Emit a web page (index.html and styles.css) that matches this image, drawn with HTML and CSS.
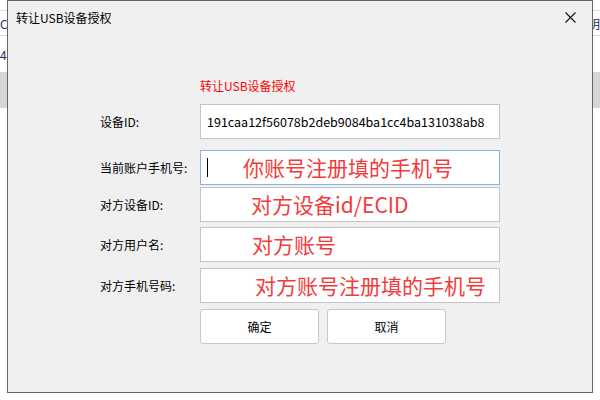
FILE: index.html
```
<!DOCTYPE html>
<html>
<head>
<meta charset="utf-8">
<link rel="stylesheet" href="styles.css">
</head>
<body>
<div class="bg">
  <div class="bg-row bg-top"></div>
  <div class="bg-row bg-r2"><span class="bg-left">Cl</span><span class="bg-right">明</span></div>
  <div class="bg-row bg-r3"><span class="bg-left">4c</span></div>
  <div class="bg-row bg-grey"></div>
</div>

<div class="dialog">
  <div class="titlebar">
    <span class="title">转让USB设备授权</span>
    <svg class="close" width="11" height="11" viewBox="0 0 11 11"><path d="M0.5 0.5L10.5 10.5M10.5 0.5L0.5 10.5" stroke="#111" stroke-width="1.1" fill="none"/></svg>
  </div>
  <div class="content">
    <div class="heading">转让USB设备授权</div>
    <div class="row r1"><span class="label">设备ID:</span><div class="box"><span class="val">191caa12f56078b2deb9084ba1cc4ba131038ab8</span></div></div>
    <div class="row r2"><span class="label">当前账户手机号:</span><div class="box focus"><span class="caret"></span><span class="hint h2">你账号注册填的手机号</span></div></div>
    <div class="row r3"><span class="label">对方设备ID:</span><div class="box"><span class="hint h3">对方设备id/ECID</span></div></div>
    <div class="row r4"><span class="label">对方用户名:</span><div class="box"><span class="hint h4">对方账号</span></div></div>
    <div class="row r5"><span class="label">对方手机号码:</span><div class="box"><span class="hint h5">对方账号注册填的手机号</span></div></div>
    <div class="row r6"><span class="label"></span><div class="buttons"><button class="btn">确定</button><button class="btn">取消</button></div></div>
  </div>
</div>
</body>
</html>
```
FILE: styles.css
```
* { box-sizing: border-box; }
html, body { margin: 0; padding: 0; }
body {
  width: 600px; height: 400px; overflow: hidden; position: relative;
  background: #fff;
  font-family: "Noto Sans CJK SC", "Microsoft YaHei", sans-serif;
  font-size: 12px; color: #000;
}
.bg-row { display: flex; align-items: center; justify-content: space-between; }
.bg-top { height: 11px; border-bottom: 1px solid #dcdcdc; }
.bg-r2 { height: 25px; border-bottom: 1px solid #dcdcdc; color: #1b2a55; font-size: 12px; }
.bg-r3 { height: 36px; color: #1b2a55; font-size: 12px; }
.bg-grey { height: 36px; background: #d6d6d6; }
.bg-left { margin-left: 0; }
.bg-right { margin-right: 0; }

.dialog {
  position: absolute; left: 7px; top: 0; width: 586px; height: 393px;
  background: #f0f0f0; border: 1px solid #666;
}
.titlebar {
  height: 32px; display: flex; align-items: center; justify-content: space-between;
  padding-left: 8px; padding-right: 16px;
}
.title { font-size: 12px; color: #000; }
.close { display: block; }
.content { padding-left: 92px; }
.heading {
  margin-top: 45px; padding-left: 100px; height: 16px; line-height: 16px;
  color: #f00; font-size: 12px;
}
.row { display: flex; align-items: center; }
.label { width: 100px; flex: none; font-size: 12px; }
.box {
  width: 300px; height: 35px; background: #fff; border: 1px solid #c4c4c4;
  display: flex; align-items: center; position: relative; white-space: nowrap; overflow: hidden;
}
.box.focus { border-color: #85b3e2; }
.r1 { margin-top: 10px; }
.r2 { margin-top: 11px; }
.r3 { margin-top: 2px; }
.r4 { margin-top: 5px; }
.r5 { margin-top: 6px; }
.r6 { margin-top: 6px; }
.val { padding-left: 6px; font-size: 12.5px; color: #000; }
.caret { position: absolute; left: 6px; top: 7px; width: 1px; height: 19px; background: #000; }
.hint { color: #f23c3c; font-size: 21px; line-height: 1; }
.h2 { padding-left: 42px; }
.h3 { padding-left: 50px; }
.h4 { padding-left: 51px; }
.h5 { padding-left: 54px; }
.buttons { display: flex; gap: 8px; }
.btn {
  width: 119px; height: 35px; background: #fff; border: 1px solid #c8c8c8; border-radius: 3px;
  font-family: inherit; font-size: 12px; color: #000; padding: 0;
}
```
